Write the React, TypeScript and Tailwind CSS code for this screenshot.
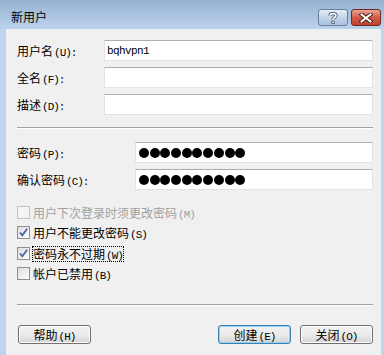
import React from 'react'

const cjk = "font-['Noto_Sans_CJK_SC','Noto_Sans',sans-serif]"
const mono = "font-['Liberation_Mono',monospace]"

const Label: React.FC<{ text: string; mn: string; colon?: boolean; className?: string }> = ({ text, mn, colon = true, className = '' }) => (
  <span className={`${cjk} inline-flex items-baseline h-[14px] text-[12px] leading-[14px] whitespace-nowrap ${className}`}>
    {text}
    <span className={`${mono} text-[11px] leading-[14px] ml-[1px] tracking-[-1px]`}>({mn}){colon ? ':' : ''}</span>
  </span>
)

const Field: React.FC<{ children?: React.ReactNode }> = ({ children }) => (
  <div className="flex-1 h-[21px] bg-white border border-[#e2e3ea] border-t-[#abadb3] flex items-center px-[2px]">
    {children}
  </div>
)

const Dots: React.FC = () => (
  <div className="flex gap-[0.7px] pl-[1px]">
    {Array.from({ length: 10 }).map((_, i) => (
      <div key={i} className="w-[10px] h-[10px] rounded-full bg-black" />
    ))}
  </div>
)

const Check: React.FC<{ checked?: boolean; disabled?: boolean }> = ({ checked, disabled }) => (
  <div
    className={`w-[13px] h-[13px] border ${disabled ? 'border-[#c4c4c4] bg-[#f4f4f4]' : 'border-[#8f8f8f] bg-gradient-to-br from-[#dcdcdc] to-white'} flex items-center justify-center shrink-0`}
  >
    {checked && (
      <svg width="11" height="11" viewBox="0 0 11 11">
        <path d="M2 5.5 L4.3 8.3 L9.2 1.8" fill="none" stroke="#4b63a3" strokeWidth="1.8" />
      </svg>
    )}
  </div>
)

const Btn: React.FC<{ children: React.ReactNode; def?: boolean; className?: string }> = ({ children, def, className = '' }) => (
  <div
    className={`w-[73px] h-[19px] rounded-[3px] border ${def ? 'border-[#3c7fb1] shadow-[inset_0_0_0_1px_#8fd2f5]' : 'border-[#707070] shadow-[inset_0_0_0_1px_#fcfcfc]'} bg-gradient-to-b from-[#f2f2f2] via-[#ebebeb] to-[#d4d4d4] flex items-center justify-center ${className}`}
  >
    {children}
  </div>
)

const App: React.FC = () => {
  return (
    <div className={`w-[384px] h-[355px] bg-[#bfd5ee] flex flex-col overflow-hidden text-[12px] leading-[14px] ${cjk}`}>
      {/* title bar */}
      <div className="h-[29px] shrink-0 bg-gradient-to-b from-[#95b1d2] to-[#bcd3ec] flex items-start pl-[11px] pr-[3px]">
        <span className="mt-[10px] text-black">新用户</span>
        <div className="ml-auto mt-[9px] flex gap-[3px]">
          <div className="w-[30px] h-[17px] rounded-[3px] border border-[#6b7f99] bg-gradient-to-b from-[#e4edf7] via-[#c3d4e8] to-[#a9c1df] flex items-center justify-center">
            <svg width="10" height="12" viewBox="0 0 10 12">
              <path d="M2 3.5 C2 1 8 1 8 3.5 C8 5.5 5 5.5 5 7.5" fill="none" stroke="#3a4a60" strokeWidth="3.2" />
              <path d="M2 3.5 C2 1 8 1 8 3.5 C8 5.5 5 5.5 5 7.5" fill="none" stroke="#ffffff" strokeWidth="1.6" />
              <rect x="3.4" y="8.8" width="3.2" height="3" fill="#3a4a60" />
              <rect x="4.2" y="9.5" width="1.6" height="1.6" fill="#ffffff" />
            </svg>
          </div>
          <div className="w-[30px] h-[17px] rounded-[3px] border border-[#6e2a1f] bg-gradient-to-b from-[#e8a597] via-[#d15b44] to-[#c0422a] flex items-center justify-center">
            <svg width="14" height="10" viewBox="0 0 14 10">
              <path d="M2.5 1.5 L11.5 8.5 M11.5 1.5 L2.5 8.5" stroke="#4a1a12" strokeWidth="4" strokeLinecap="square" />
              <path d="M2.5 1.5 L11.5 8.5 M11.5 1.5 L2.5 8.5" stroke="#ffffff" strokeWidth="2" strokeLinecap="square" />
            </svg>
          </div>
        </div>
      </div>

      {/* body */}
      <div className="flex-1 pl-[6px] pr-[3px]">
        <div className="h-full bg-[#f0f0f0] pl-[11px] pr-[8px] pt-[11px] flex flex-col text-black">
          <div className="flex flex-col gap-[6px]">
            <div className="flex items-center">
              <div className="w-[87px] flex"><Label text="用户名" mn="U" /></div>
              <Field>
                <span className={`${mono} text-[11px] tracking-[-0.6px] text-black`}>bqhvpn1</span>
              </Field>
            </div>
            <div className="flex items-center">
              <div className="w-[87px] flex"><Label text="全名" mn="F" /></div>
              <Field />
            </div>
            <div className="flex items-center">
              <div className="w-[87px] flex"><Label text="描述" mn="D" /></div>
              <Field />
            </div>
          </div>

          <div className="mt-[12px] h-[2px] border-t border-[#a0a0a0] border-b border-b-white" />

          <div className="mt-[13px] flex flex-col gap-[6px]">
            <div className="flex items-center">
              <div className="w-[118px] flex"><Label text="密码" mn="P" /></div>
              <Field><Dots /></Field>
            </div>
            <div className="flex items-center">
              <div className="w-[118px] flex"><Label text="确认密码" mn="C" /></div>
              <Field><Dots /></Field>
            </div>
          </div>

          <div className="mt-[16px] flex flex-col">
            <div className="h-[20px] flex items-start gap-[3px]">
              <Check disabled />
              <Label text="用户下次登录时须更改密码" mn="M" colon={false} className="text-[#a0a0a0]" />
            </div>
            <div className="h-[21px] flex items-start gap-[3px]">
              <Check checked />
              <Label text="用户不能更改密码" mn="S" colon={false} />
            </div>
            <div className="h-[20px] flex items-start gap-[2px]">
              <Check checked />
              <div className="flex border border-dotted border-black -mt-[1px]">
                <Label text="密码永不过期" mn="W" colon={false} />
              </div>
            </div>
            <div className="h-[20px] flex items-start gap-[3px]">
              <Check />
              <Label text="帐户已禁用" mn="B" colon={false} />
            </div>
          </div>

          <div className="mt-[17px] h-[2px] border-t border-[#a0a0a0] border-b border-b-white" />

          <div className="mt-[19px] flex items-center pl-[1px]">
            <Btn><Label text="帮助" mn="H" colon={false} /></Btn>
            <Btn def className="ml-auto"><Label text="创建" mn="E" colon={false} /></Btn>
            <Btn className="ml-[9px]"><Label text="关闭" mn="O" colon={false} /></Btn>
          </div>
        </div>
      </div>
    </div>
  )
}

export default App
